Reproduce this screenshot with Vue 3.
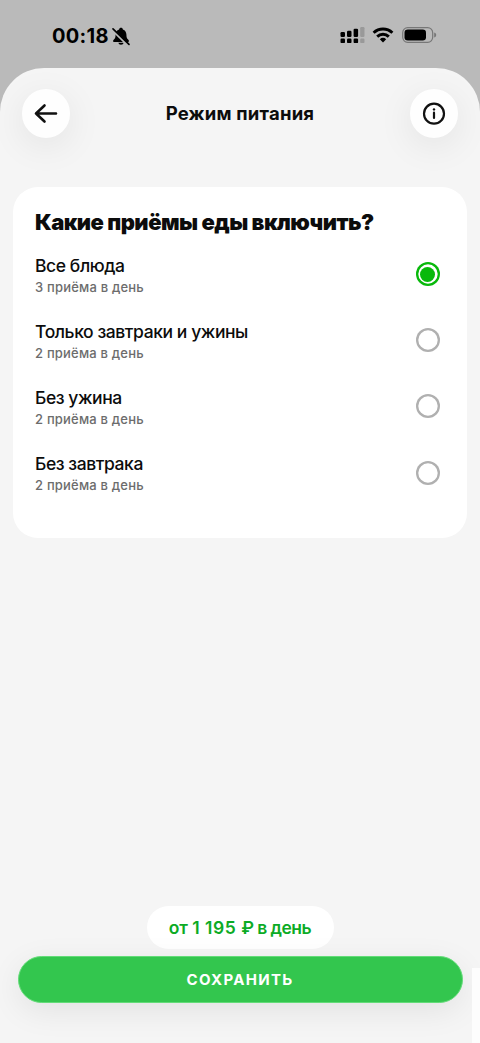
<script setup>
import { ref } from 'vue'

const selected = ref(0)
const options = [
  { title: 'Все блюда', note: '3 приёма в день' },
  { title: 'Только завтраки и ужины', note: '2 приёма в день' },
  { title: 'Без ужина', note: '2 приёма в день' },
  { title: 'Без завтрака', note: '2 приёма в день' },
]
</script>

<template>
  <div class="screen">
    <div class="status">
      <div class="clock">
        <span class="time">00:18</span>
        <svg class="bell" width="20" height="20" viewBox="0 0 20 20">
          <path d="M10 1.800c-1 0-1.800.7-1.900 1.600C5.700 4.300 4.700 6.200 4.600 8.500c-.1 3-.5 3.900-1.700 5-.6.5-.8 1-.8 1.500 0 .6.400 1 1.100 1h13.600c.7 0 1.100-.4 1.100-1 0-.5-.2-1-.8-1.500-1.200-1.100-1.600-2-1.700-5-.1-2.300-1.100-4.200-3.500-5.100C11.800 2.500 11 1.800 10 1.800z" />
          <path d="M7.400 16.800h5.200c-.2 1.200-1.200 2-2.600 2s-2.400-.8-2.600-2z" />
          <path d="M2 4.300L17.500 19.800" stroke="#bababa" stroke-width="2.600" />
          <path d="M2 2.800L18 18.300" stroke="#000" stroke-width="1.700" stroke-linecap="round" />
        </svg>
      </div>
      <div class="indicators">
        <svg width="25" height="18" viewBox="0 0 25 18">
          <g fill="#000">
            <rect x="0.500" y="6" width="4.500" height="5" rx="1.200" />
            <rect x="7" y="4.700" width="4.500" height="6.300" rx="1.200" />
            <rect x="13.600" y="2.800" width="4.500" height="8.200" rx="1.200" />
            <rect x="0.500" y="12.600" width="4.500" height="4.500" rx="1.200" />
            <rect x="7" y="12.600" width="4.500" height="4.500" rx="1.200" />
            <rect x="13.600" y="12.600" width="4.500" height="4.500" rx="1.200" />
          </g>
          <g fill="#999">
            <rect x="20.200" y="1" width="4.300" height="10" rx="1.200" />
            <rect x="20.200" y="12.600" width="4.300" height="4.500" rx="1.200" />
          </g>
        </svg>
        <svg class="wifi" width="22" height="18" viewBox="0 0 22 18" fill="none" stroke="#000" stroke-width="2.900">
          <path d="M1.600 6.700a13.600 13.600 0 0 1 18.800 0" />
          <path d="M5.200 10.600a8.400 8.400 0 0 1 11.600 0" />
          <path d="M11 16.500l-3.200-3.200a4.700 4.700 0 0 1 6.400 0z" fill="#000" stroke="none" />
        </svg>
        <svg class="battery" width="35" height="18" viewBox="0 0 35 18">
          <rect x="0.700" y="1.700" width="30" height="14.600" rx="5" fill="none" stroke="#777" stroke-width="1.200" />
          <rect x="2.500" y="3.500" width="21.500" height="11" rx="3.300" fill="#000" />
          <path d="M32.200 6.600c1.500.5 2 1.300 2 2.400s-.5 1.900-2 2.400z" fill="#777" />
        </svg>
      </div>
    </div>

    <main class="sheet">
      <header class="header">
        <button class="round" aria-label="Назад">
          <svg width="24" height="24" viewBox="0 0 24 24" fill="none" stroke="#111" stroke-width="2.600" stroke-linecap="round" stroke-linejoin="round">
            <path d="M22 11.500H2M10.500 3.500L2 11.500L10.500 19.500" />
          </svg>
        </button>
        <h1>Режим питания</h1>
        <button class="round" aria-label="Информация">
          <svg width="24" height="24" viewBox="0 0 24 24" fill="none" stroke="#111">
            <circle cx="12" cy="11.700" r="10" stroke-width="2.200" />
            <path d="M12 10.700v5.300" stroke-width="2.200" stroke-linecap="round" />
            <circle cx="12" cy="7.400" r="1.200" fill="#111" stroke="none" />
          </svg>
        </button>
      </header>

      <section class="card">
        <h2>Какие приёмы еды включить?</h2>
        <div v-for="(option, i) in options" :key="i" class="option" @click="selected = i">
          <div class="copy">
            <div class="label">{{ option.title }}</div>
            <div class="note">{{ option.note }}</div>
          </div>
          <span class="radio" :class="{ on: selected === i }"></span>
        </div>
      </section>

      <footer class="footer">
        <div class="price"><span>от <span class="amount">1 195 </span><span class="unit">₽ в день</span></span></div>
        <button class="save"><span>СОХРАНИТЬ</span></button>
      </footer>
      <i class="edge"></i>
    </main>
  </div>
</template>

<style>
body { background: #bababa; }
</style>

<style scoped>
.screen {
  box-sizing: border-box;
  width: 480px;
  height: 1043px;
  overflow: hidden;
  display: flex;
  flex-direction: column;
  background: #bababa;
  font-family: Inter, "Liberation Sans", sans-serif;
  color: #0c0c0c;
}
.status {
  box-sizing: border-box;
  height: 68px;
  padding: 26px 43.500px 0 52px;
  display: flex;
  justify-content: space-between;
  align-items: flex-start;
}
.clock { display: flex; height: 20px; align-items: center; color: #000; }
.time { font-size: 20px; line-height: 20px; font-weight: 700; letter-spacing: 0.300px; }
.bell { margin-left: 2px; }
.indicators { display: flex; height: 18px; align-items: center; }
.wifi { margin-left: 7px; }
.battery { margin-left: 8px; }
.sheet {
  position: relative;
  box-sizing: border-box;
  height: 975px;
  padding: 21px 13px 40px;
  display: flex;
  flex-direction: column;
  border-radius: 44px 44px 0 0;
  background: #f5f5f5;
  overflow: hidden;
}
.header {
  display: flex;
  align-items: center;
  justify-content: space-between;
  padding: 0 8.500px;
  height: 49px;
}
h1 { margin: 0 0 1.500px; font-size: 18.500px; line-height: 24px; font-weight: 700; letter-spacing: 0.200px; }
.round {
  display: grid;
  place-items: center;
  width: 48.500px;
  height: 48.500px;
  padding: 0;
  border: 0;
  border-radius: 50%;
  background: #fefefe;
  box-shadow: 0 8px 36px rgba(0, 0, 0, 0.08);
}
.card {
  box-sizing: border-box;
  height: 351.500px;
  margin-top: 48.500px;
  padding: 21px 27.500px 0 22px;
  border-radius: 25px;
  background: #fff;
}
h2 { margin: 0 0 15.500px; font-size: 22px; line-height: 28px; font-weight: 900; letter-spacing: -0.530px; white-space: nowrap; }
.option { display: flex; align-items: center; justify-content: space-between; height: 46px; margin-bottom: 20.200px; }
.label { font-size: 17.500px; line-height: 24px; font-weight: 500; letter-spacing: -0.420px; white-space: nowrap; position: relative; top: 1px; }
.note { margin-top: 1px; font-size: 13px; line-height: 18px; font-weight: 500; letter-spacing: 0.200px; color: #6c6c6c; }
.radio {
  display: grid;
  place-items: center;
  width: 24px;
  height: 24px;
  border-radius: 50%;
  box-shadow: inset 0 0 0 2.300px #b0b0b0;
}
.radio.on { box-shadow: inset 0 0 0 2.300px #08b90b; }
.radio.on::after { content: ""; width: 15px; height: 15px; border-radius: 50%; background: #08b90b; }
.footer { margin-top: auto; padding: 0 4px; display: flex; flex-direction: column; align-items: center; }
.price {
  display: grid;
  place-items: center;
  width: 187px;
  height: 43.500px;
  margin-bottom: 0.500px;
  border-radius: 22px;
  background: #fff;
  color: #0cab25;
  font-size: 17.500px;
  font-weight: 600;
  letter-spacing: -0.100px;
  white-space: nowrap;
}
.amount { letter-spacing: 0.550px; }
.unit { letter-spacing: -0.450px; word-spacing: -0.300px; }
.save {
  box-sizing: border-box;
  width: 445px;
  height: 47.500px;
  margin-top: 6px;
  padding: 1px 0 0;
  border: 1px solid #63dc78;
  border-radius: 24px;
  background: #33c64e;
  color: #fff;
  font: 700 15px/20px Inter, "Liberation Sans", sans-serif;
  letter-spacing: 1.300px;
  box-shadow: 0 8px 32px rgba(0, 0, 0, 0.08);
}
/* Sliver of the adjoining panel at the lower right of the sheet */
.edge { position: absolute; right: 0; bottom: 0; width: 8px; height: 75px; background: #fdfdfd; }
</style>
